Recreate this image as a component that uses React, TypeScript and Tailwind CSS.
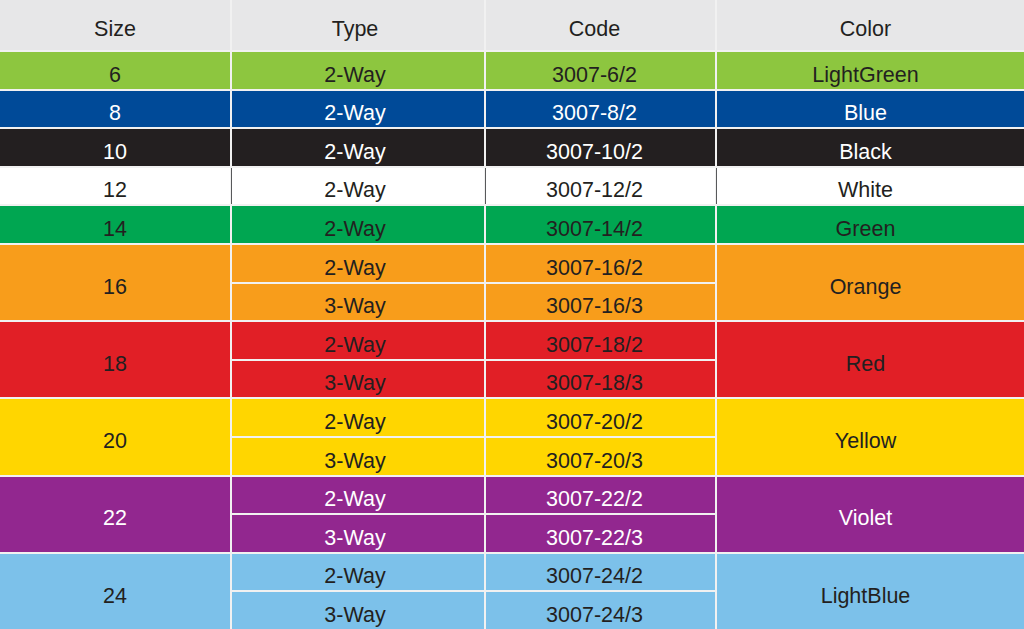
type Group = {
  size: string;
  color: string;
  bg: string;
  text: string;
  rows: { type: string; code: string }[];
};

const groups: Group[] = [
  { size: "6", color: "LightGreen", bg: "bg-[#8dc63f]", text: "text-[#231f20]", rows: [{ type: "2-Way", code: "3007-6/2" }] },
  { size: "8", color: "Blue", bg: "bg-[#004a98]", text: "text-white", rows: [{ type: "2-Way", code: "3007-8/2" }] },
  { size: "10", color: "Black", bg: "bg-[#231f20]", text: "text-white", rows: [{ type: "2-Way", code: "3007-10/2" }] },
  { size: "12", color: "White", bg: "bg-white", text: "text-[#231f20]", rows: [{ type: "2-Way", code: "3007-12/2" }] },
  { size: "14", color: "Green", bg: "bg-[#00a651]", text: "text-[#231f20]", rows: [{ type: "2-Way", code: "3007-14/2" }] },
  {
    size: "16",
    color: "Orange",
    bg: "bg-[#f89d1b]",
    text: "text-[#231f20]",
    rows: [
      { type: "2-Way", code: "3007-16/2" },
      { type: "3-Way", code: "3007-16/3" },
    ],
  },
  {
    size: "18",
    color: "Red",
    bg: "bg-[#e11f26]",
    text: "text-[#231f20]",
    rows: [
      { type: "2-Way", code: "3007-18/2" },
      { type: "3-Way", code: "3007-18/3" },
    ],
  },
  {
    size: "20",
    color: "Yellow",
    bg: "bg-[#ffd600]",
    text: "text-[#231f20]",
    rows: [
      { type: "2-Way", code: "3007-20/2" },
      { type: "3-Way", code: "3007-20/3" },
    ],
  },
  {
    size: "22",
    color: "Violet",
    bg: "bg-[#92278f]",
    text: "text-white",
    rows: [
      { type: "2-Way", code: "3007-22/2" },
      { type: "3-Way", code: "3007-22/3" },
    ],
  },
  {
    size: "24",
    color: "LightBlue",
    bg: "bg-[#7cc1ea]",
    text: "text-[#231f20]",
    rows: [
      { type: "2-Way", code: "3007-24/2" },
      { type: "3-Way", code: "3007-24/3" },
    ],
  },
];

// text in the source chart sits a little low and slightly left of centre
const cell = "flex items-center justify-center pt-[10px] leading-none";
const cols = ["", "pr-[6px]", "pr-[12px]", "pr-[10px]"];

export default function App() {
  return (
    <div className="h-[629px] w-[1024px] overflow-hidden bg-white font-['Liberation_Sans',Arial,sans-serif] text-[21.5px]">
      <div className="grid h-[629px] grid-cols-[230px_252px_229px_1fr] grid-rows-[50px_repeat(15,1fr)] gap-[2px] bg-[#f1f1f1]">
        {["Size", "Type", "Code", "Color"].map((h, i) => (
          <div key={h} className={`${cell} ${cols[i]} bg-[#e7e7e8] text-[#231f20]`}>
            {h}
          </div>
        ))}
        {groups.map((g) => {
          const span = g.rows.length === 2 ? "row-span-2" : "";
          const divider = g.color === "White" ? "shadow-[-1px_0_0_#58595b]" : "";
          return g.rows.map((r, i) => (
            <div key={`${g.size}-${r.code}`} className="contents">
              {i === 0 && (
                <div className={`${cell} ${span} ${g.bg} ${g.text}`}>{g.size}</div>
              )}
              <div className={`${cell} ${cols[1]} ${g.bg} ${g.text} ${divider}`}>{r.type}</div>
              <div className={`${cell} ${cols[2]} ${g.bg} ${g.text} ${divider}`}>{r.code}</div>
              {i === 0 && (
                <div className={`${cell} ${cols[3]} ${span} ${g.bg} ${g.text} ${divider}`}>{g.color}</div>
              )}
            </div>
          ));
        })}
      </div>
    </div>
  );
}
